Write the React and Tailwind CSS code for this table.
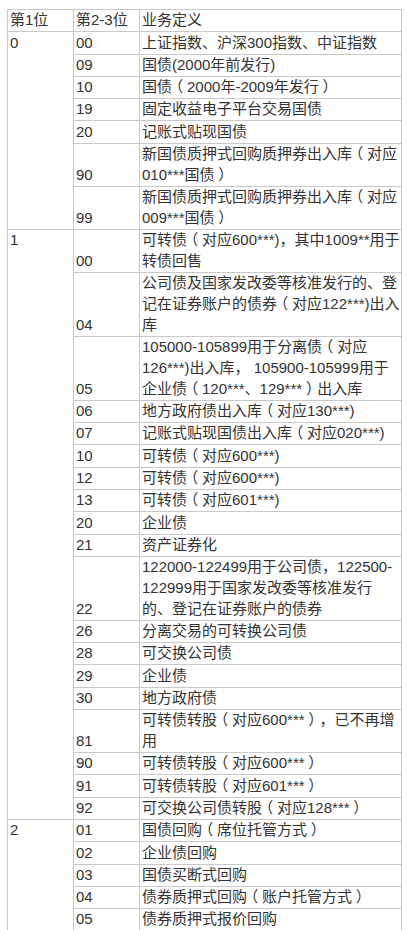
import React from "react";

const groups = [
  {
    g: "0",
    rows: [
      ["00", ["上证指数、沪深300指数、中证指数"]],
      ["09", ["国债(2000年前发行)"]],
      ["10", ["国债（2000年-2009年发行）"]],
      ["19", ["固定收益电子平台交易国债"]],
      ["20", ["记账式贴现国债"]],
      ["90", ["新国债质押式回购质押券出入库（对应", "010***国债）"]],
      ["99", ["新国债质押式回购质押券出入库（对应", "009***国债）"]],
    ],
  },
  {
    g: "1",
    rows: [
      ["00", ["可转债（对应600***)，其中1009**用于", "转债回售"]],
      ["04", ["公司债及国家发改委等核准发行的、登", "记在证券账户的债券（对应122***)出入", "库"]],
      ["05", ["105000-105899用于分离债（对应", "126***)出入库， 105900-105999用于", "企业债（120***、129***）出入库"]],
      ["06", ["地方政府债出入库（对应130***)"]],
      ["07", ["记账式贴现国债出入库（对应020***)"]],
      ["10", ["可转债（对应600***)"]],
      ["12", ["可转债（对应600***)"]],
      ["13", ["可转债（对应601***)"]],
      ["20", ["企业债"]],
      ["21", ["资产证券化"]],
      ["22", ["122000-122499用于公司债，122500-", "122999用于国家发改委等核准发行", "的、登记在证券账户的债券"]],
      ["26", ["分离交易的可转换公司债"]],
      ["28", ["可交换公司债"]],
      ["29", ["企业债"]],
      ["30", ["地方政府债"]],
      ["81", ["可转债转股（对应600***），已不再增", "用"]],
      ["90", ["可转债转股（对应600***）"]],
      ["91", ["可转债转股（对应601***）"]],
      ["92", ["可交换公司债转股（对应128***）"]],
    ],
  },
  {
    g: "2",
    rows: [
      ["01", ["国债回购（席位托管方式）"]],
      ["02", ["企业债回购"]],
      ["03", ["国债买断式回购"]],
      ["04", ["债券质押式回购（账户托管方式）"]],
      ["05", ["债券质押式报价回购"]],
    ],
  },
];

const cell =
  "border border-[#c9c9c9] px-[2px] py-[0.25px] leading-[20.8px] whitespace-nowrap text-left font-normal";

function renderLine(l) {
  const parts = l.split(/([（）])/);
  return parts.map((p, k) => {
    if (p === "（" || p === "）")
      return (
        <span key={k} className="inline-block px-[3.75px] [font-feature-settings:'halt']">
          {p}
        </span>
      );
    return <React.Fragment key={k}>{p}</React.Fragment>;
  });
}

export default function App() {
  return (
    <div className="bg-white min-h-[930px] pt-[9px] pl-[7px]">
      <table
        className="border-collapse table-fixed w-[394px] text-[15px] text-[#333333]"
        style={{ fontFamily: '"Liberation Sans", Arial, "Noto Sans CJK SC", sans-serif' }}
      >
        <colgroup>
          <col className="w-[66px]" />
          <col className="w-[66px]" />
          <col className="w-[262px]" />
        </colgroup>
        <thead>
          <tr>
            <th className={cell + " align-bottom"}>第1位</th>
            <th className={cell + " align-bottom"}>第2-3位</th>
            <th className={cell + " align-bottom"}>业务定义</th>
          </tr>
        </thead>
        <tbody>
          {groups.map((grp) =>
            grp.rows.map(([code, lines], i) => (
              <tr key={grp.g + code}>
                {i === 0 && (
                  <td rowSpan={grp.rows.length} className={cell + " align-top"}>
                    {grp.g}
                  </td>
                )}
                <td className={cell + " align-bottom"}>{code}</td>
                <td className={cell + " align-bottom"}>
                  {lines.map((l, j) => (
                    <React.Fragment key={j}>
                      {j > 0 && <br />}
                      {renderLine(l)}
                    </React.Fragment>
                  ))}
                </td>
              </tr>
            ))
          )}
        </tbody>
      </table>
    </div>
  );
}
